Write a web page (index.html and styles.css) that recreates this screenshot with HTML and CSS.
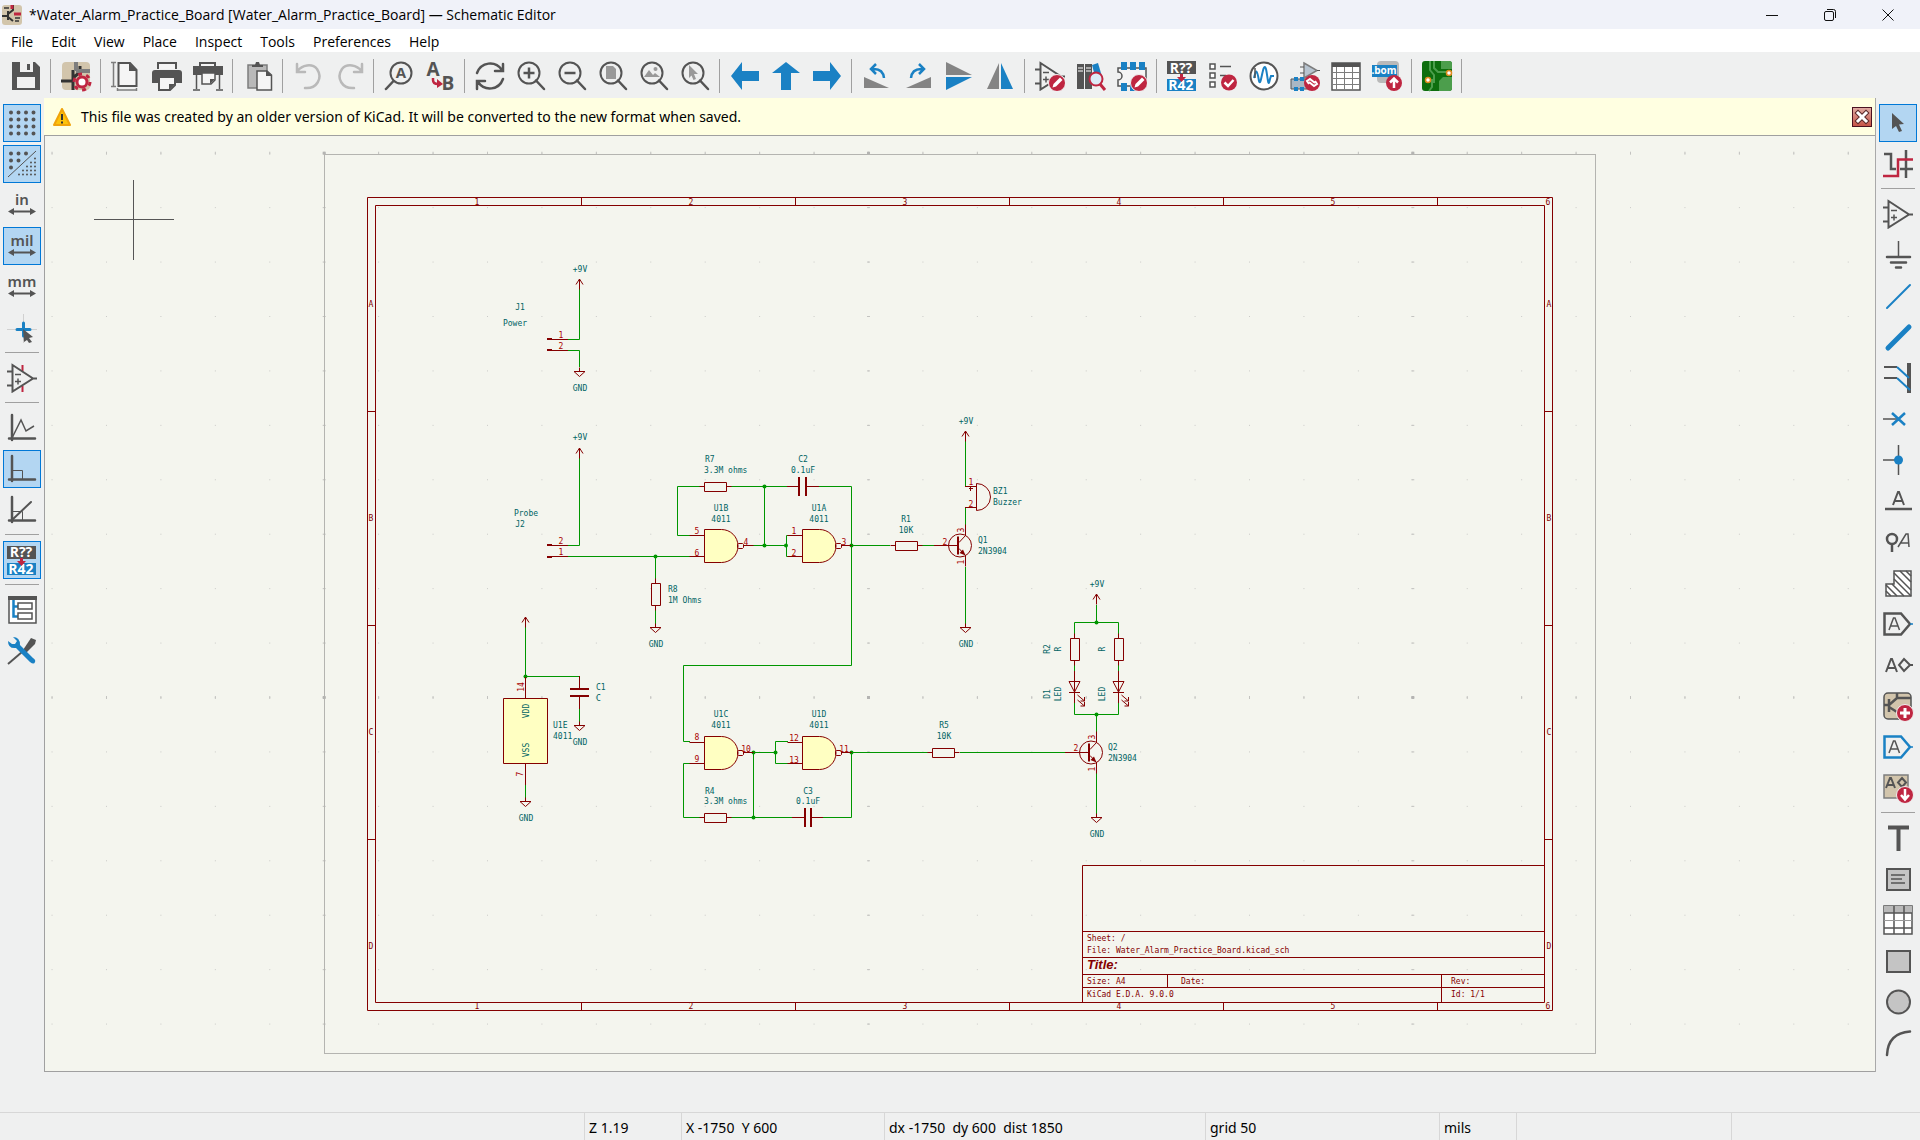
FILE: index.html
```
<!DOCTYPE html>
<html lang="en">
<head>
    <meta charset="UTF-8">
    <meta name="viewport" content="width=device-width, initial-scale=1.0">
    <title>*Water_Alarm_Practice_Board [Water_Alarm_Practice_Board] — Schematic Editor</title>
    <link rel="stylesheet" href="styles.css">
</head>
<body>
    <!-- shared icon parts -->
    <svg class="defs" aria-hidden="true">
        <symbol id="lens" viewBox="0 0 30 30">
            <circle cx="13" cy="12" r="10.500" fill="none" stroke="#545454" stroke-width="2"/>
            <path d="M20 19.500 L28 28" stroke="#545454" stroke-width="2.500" stroke-linecap="round"/>
        </symbol>
        <symbol id="opamp" viewBox="0 0 30 30">
            <path d="M5.500 2 L26 15.500 L5.500 28.500z M0 8.500 h5 M0 22.500 h5 M26 15.500 h4" fill="none" stroke="#545454" stroke-width="2"/>
            <path d="M8 11.500 h6 M8 18.500 h6 M11 15.500 v6" stroke="#545454" stroke-width="1.500"/>
        </symbol>
        <symbol id="pencil" viewBox="0 0 30 30">
            <circle cx="22" cy="22" r="8.500" fill="#bf2641" stroke="#f0f0f0"/>
            <path d="M17.500 26.500 l1 -3.500 6.500 -6.500 2.500 2.500 -6.500 6.500z" fill="#fff"/>
        </symbol>
        <symbol id="axes" viewBox="0 0 30 30">
            <path d="M5 2 V27 M2 25.500 H28" stroke="#545454" stroke-width="2.500" stroke-linecap="round"/>
        </symbol>
        <symbol id="arrows-h" viewBox="0 0 30 30">
            <path d="M5 21.500 H25" stroke="#545454" stroke-width="2"/>
            <path d="M1 21.500 l6 -3.500 v7z M29 21.500 l-6 -3.500 v7z" fill="#545454"/>
        </symbol>
        <symbol id="label-flag" viewBox="0 0 30 30">
            <path d="M1.500 4.500 H18 L27 15 L18 25.500 H1.500z" fill="none" stroke="currentColor" stroke-width="2.500"/>
            <path d="M27 15 h3" stroke="#1a81c4" stroke-width="1.500"/>
            <path d="M6 21 L10.500 9 h1.500 L16.500 21 M8 17 h7" fill="none" stroke="#545454" stroke-width="1.500"/>
        </symbol>
    </svg>

    <header class="title-bar">
        <svg class="app-icon" viewBox="0 0 20 20">
            <rect width="20" height="20" rx="3" fill="#d2c5ac"/>
            <path d="M6 6 V15 M0 11 H6 M6 9 L11 5 V0 M6 12 L11 16" fill="none" stroke="#333" stroke-width="2"/>
            <path d="M10 4 V0 M12 9 h7" stroke="#bf2641" stroke-width="3"/>
            <path d="M2 3 h5 M13 13 h5 M13 16 h4" stroke="#333" stroke-width="1.500"/>
        </svg>
        <h1>*Water_Alarm_Practice_Board [Water_Alarm_Practice_Board] — Schematic Editor</h1>
        <div class="window-buttons">
            <button aria-label="Minimize"><svg viewBox="0 0 14 14"><path d="M1 7.500 H13"/></svg></button>
            <button aria-label="Restore"><svg viewBox="0 0 14 14"><rect x="1.500" y="3.500" width="9" height="9" rx="1.500"/><path d="M4 1.500 h6.500 a2 2 0 0 1 2 2 V10"/></svg></button>
            <button aria-label="Close"><svg viewBox="0 0 14 14"><path d="M1.500 1.500 L12.500 12.500 M12.500 1.500 L1.500 12.500"/></svg></button>
        </div>
    </header>

    <nav class="menu-bar">
        <button>File</button>
        <button>Edit</button>
        <button>View</button>
        <button>Place</button>
        <button>Inspect</button>
        <button>Tools</button>
        <button>Preferences</button>
        <button>Help</button>
    </nav>

    <div class="toolbar" role="toolbar">
        <button aria-label="Save"><svg viewBox="0 0 30 30"><path d="M1 1 H24 L29 6 V29 H1z" fill="#545454"/><path d="M9 1 h13 v10 h-13z M6 16 h18 v11 h-18z" fill="#f0f0f0"/><path d="M16 3 h3 v6 h-3z" fill="#545454"/></svg></button>
        <hr>
        <button aria-label="Schematic setup"><svg viewBox="0 0 30 30"><rect x="1" y="1" width="28" height="28" rx="4" fill="#d2c5ac"/><path d="M12 9 V29 M0 20 H12 M12 17 L19 11 V5" stroke="#333" stroke-width="3" fill="none"/><path d="M15 1 v9 M15 10 h14" stroke="#7d7d7d" stroke-width="4"/><circle cx="21" cy="21" r="8" fill="none" stroke="#bf2641" stroke-width="3" stroke-dasharray="4 4.370"/><circle cx="21" cy="21" r="5" fill="#fff" stroke="#bf2641" stroke-width="3"/></svg></button>
        <hr>
        <button aria-label="Page settings"><svg viewBox="0 0 30 30"><path d="M7.500 2 H19 L25.500 9 V25 H7.500z" fill="#f5f5f5" stroke="#545454" stroke-width="2"/><path d="M18 2 v8 h8z" fill="#545454"/><path d="M2.500 1 V25 M0 1.500 h5 M0 25.500 h5 M6 29 H26 M6.500 27 v3 M25.500 27 v3" stroke="#7d7d7d" stroke-width="1.500"/></svg></button>
        <button aria-label="Print"><svg viewBox="0 0 30 30"><path d="M6 8 V2 H24 V8" fill="#f5f5f5" stroke="#545454" stroke-width="2"/><path d="M3 9 H27 a3 3 0 0 1 3 3 V22 H0 V12 a3 3 0 0 1 3 -3z" fill="#545454"/><path d="M7 16 H23 V24 L18 29 H7z" fill="#f5f5f5" stroke="#545454" stroke-width="2"/><path d="M23 23 h-6 v6z" fill="#545454"/></svg></button>
        <button aria-label="Plot"><svg viewBox="0 0 30 30"><path d="M7 6 V2 H22 V6" fill="#f5f5f5" stroke="#545454" stroke-width="2"/><path d="M0 5 H30 V14 H0z" fill="#545454"/><path d="M3.500 12 V28 M26.500 12 V28 M0 29 h7 M23 29 h7" stroke="#545454" stroke-width="1.500"/><path d="M9 12 H22 V19 L18 23 H9z" fill="#f5f5f5" stroke="#545454" stroke-width="1.500"/><path d="M22 18 h-5 v5z" fill="#545454"/></svg></button>
        <hr>
        <button aria-label="Paste"><svg viewBox="0 0 30 30"><path d="M5 4 H24 V27 H5z" fill="#b9b9b9" stroke="#7d7d7d" stroke-width="1.500"/><path d="M9 6 V4 h3 l1 -3 h3 l1 3 h3 V6z" fill="#545454"/><path d="M14 10 H24 L28.500 14 V29 H14z" fill="#f5f5f5" stroke="#545454" stroke-width="1.500"/><path d="M23 9 v6 h6z" fill="#545454"/></svg></button>
        <hr>
        <button aria-label="Undo" disabled><svg viewBox="0 0 30 30"><path d="M4 3 V11 H12 M4.500 10 C9 4 19 2 24 8 C30 17 24 28 12 27" fill="none" stroke="#b9b9b9" stroke-width="2.500" stroke-linecap="round"/></svg></button>
        <button aria-label="Redo" disabled><svg viewBox="0 0 30 30"><path d="M28 3 V11 H20 M27.500 10 C23 4 13 2 8 8 C2 17 8 28 20 27" fill="none" stroke="#b9b9b9" stroke-width="2.500" stroke-linecap="round"/></svg></button>
        <hr>
        <button aria-label="Find"><svg viewBox="0 0 30 30"><circle cx="17" cy="12" r="10.500" fill="none" stroke="#545454" stroke-width="2"/><path d="M9.500 20 L2 28" stroke="#545454" stroke-width="2.500" stroke-linecap="round"/><text class="icon-text" x="17" y="17" font-size="15">A</text></svg></button>
        <button aria-label="Find and replace"><svg viewBox="0 0 30 30"><text class="icon-text" x="8" y="15" font-size="19">A</text><text class="icon-text" x="23" y="29" font-size="19">B</text><path d="M8 17 v2 q0 4 5 4" fill="none" stroke="#bf2641" stroke-width="2.500"/><path d="M12 18 l6 5 -6 4z" fill="#bf2641"/></svg></button>
        <hr>
        <button aria-label="Refresh"><svg viewBox="0 0 30 30"><path d="M2 12 C6 1 20 -1 27 9 M28 3 V10 H20 M28 18 C24 29 10 31 3 21 M2 28 V20 H10" fill="none" stroke="#545454" stroke-width="2.500" stroke-linecap="round"/></svg></button>
        <button aria-label="Zoom in"><svg viewBox="0 0 30 30"><use href="#lens"/><path d="M7.500 12 H18.500 M13 6.500 V17.500" stroke="#545454" stroke-width="2.500"/></svg></button>
        <button aria-label="Zoom out"><svg viewBox="0 0 30 30"><use href="#lens"/><path d="M7.500 12 H18.500" stroke="#545454" stroke-width="2.500"/></svg></button>
        <button aria-label="Zoom to fit"><svg viewBox="0 0 30 30"><use href="#lens"/><path d="M8 5 h7 l3 3 v10 H8z" fill="#999"/></svg></button>
        <button aria-label="Zoom to objects"><svg viewBox="0 0 30 30"><use href="#lens"/><path d="M5 16 l5 -7 4 5 2 -2 5 4z" fill="#999"/><circle cx="16.500" cy="8" r="2" fill="#999"/></svg></button>
        <button aria-label="Zoom to selection"><svg viewBox="0 0 30 30"><use href="#lens"/><path d="M9 4 L18 13 H14 L16 18 L13.500 19 L11.500 14.500 L9 17z" fill="#999"/></svg></button>
        <hr>
        <button aria-label="Back"><svg viewBox="0 0 30 30"><path d="M1 15 L12 1 V10 H29 V20 H12 V29z" fill="#1a81c4"/></svg></button>
        <button aria-label="Up"><svg viewBox="0 0 30 30"><path d="M15 1 L29 12 H20 V29 H10 V12 H1z" fill="#1a81c4"/></svg></button>
        <button aria-label="Forward"><svg viewBox="0 0 30 30"><path d="M29 15 L18 1 V10 H1 V20 H18 V29z" fill="#1a81c4"/></svg></button>
        <hr>
        <button aria-label="Rotate counterclockwise"><svg viewBox="0 0 30 30"><path d="M2 16 V27 H27z" fill="#848484"/><path d="M14 3 L9 8 L14 13 M10 8 Q21 7 22 17" fill="none" stroke="#1a81c4" stroke-width="2.500"/></svg></button>
        <button aria-label="Rotate clockwise"><svg viewBox="0 0 30 30"><path d="M28 16 V27 H3z" fill="#848484"/><path d="M16 3 L21 8 L16 13 M20 8 Q9 7 8 17" fill="none" stroke="#1a81c4" stroke-width="2.500"/></svg></button>
        <button aria-label="Mirror vertically"><svg viewBox="0 0 30 30"><path d="M2 1 L28 14 H2z" fill="#848484"/><path d="M2 16 H28 L2 29z" fill="#1a81c4"/></svg></button>
        <button aria-label="Mirror horizontally"><svg viewBox="0 0 30 30"><path d="M14 2 V28 H2z" fill="#848484"/><path d="M16 2 L28 28 H16z" fill="#1a81c4"/></svg></button>
        <hr>
        <button aria-label="Symbol editor"><svg viewBox="0 0 30 30"><use href="#opamp"/><use href="#pencil"/></svg></button>
        <button aria-label="Symbol library browser"><svg viewBox="0 0 30 30"><path d="M1 3 h7 v25 h-7z M9 3 h7 v25 h-7z" fill="#545454"/><path d="M2 7 h5 M2 10 h5 M10 7 h5 M10 10 h5" stroke="#fff"/><path d="M16 4 l6 -2 5 17 h-7z" fill="#1a81c4"/><circle cx="20" cy="18" r="6.500" fill="#dcecf7" stroke="#bf2641" stroke-width="2"/><path d="M24 23 L29 29" stroke="#bf2641" stroke-width="3"/></svg></button>
        <button aria-label="Footprint editor"><svg viewBox="0 0 30 30"><path d="M1 7 H29 V25 H1 V19 a4 4 0 0 0 0 -8z" fill="#f5f5f5" stroke="#545454" stroke-width="1.500"/><path d="M4 1 h6 v8 h-6z M13 1 h6 v8 h-6z M22 1 h6 v8 h-6z M4 22 h6 v8 h-6z M13 22 h6 v8 h-6z" fill="#1a81c4"/><use href="#pencil"/></svg></button>
        <hr>
        <button aria-label="Annotate"><svg viewBox="0 0 30 30"><rect x="0" y="0" width="29" height="13" fill="#545454"/><rect x="0" y="18" width="29" height="12" fill="#1a81c4"/><text class="icon-text" x="14" y="12" font-size="14" fill="#fff">R??</text><text class="icon-text" x="14" y="29" font-size="14" fill="#fff">R42</text><path d="M13 13 h3 v3 h3 l-4.500 5 -4.500 -5 h3z" fill="#bf2641"/></svg></button>
        <button aria-label="Electrical rules checker"><svg viewBox="0 0 30 30"><path d="M2 3 h5 v5 h-5z M2 12 h5 v5 h-5z M2 21 h5 v5 h-5z" fill="#fff" stroke="#545454" stroke-width="1.500"/><path d="M12 5.500 H23 M12 14.500 H18" stroke="#545454" stroke-width="1.500"/><circle cx="21" cy="21.500" r="8" fill="#bf2641"/><path d="M16.500 21.500 l3.500 3.500 5.500 -6" fill="none" stroke="#fff" stroke-width="2.500"/></svg></button>
        <button aria-label="Simulator"><svg viewBox="0 0 30 30"><circle cx="15" cy="15" r="13.500" fill="#fff" stroke="#545454" stroke-width="2"/><path d="M5 17 C7 8 8 8 10 20 C12 28 14 -2 17 8 C19 17 19 28 21 18 L22 15 L25 15" fill="none" stroke="#1a81c4" stroke-width="2"/><path d="M6 7 V17" stroke="#545454" stroke-width="1.500"/></svg></button>
        <button aria-label="Assign footprints"><svg viewBox="0 0 30 30"><path d="M14 2 L27 9.500 L14 17z" fill="#b7c4d0" stroke="#7d7d7d" stroke-width="1.500"/><path d="M10 6 h4 M10 12 h4 M27 9.500 h3" stroke="#545454"/><path d="M1 18 H20 V28 H1z" fill="#a9b7c4" stroke="#545454"/><path d="M4 16 h4 v4 h-4z M10 16 h4 v4 h-4z M4 26 h4 v4 h-4z M10 26 h4 v4 h-4z" fill="#1a81c4"/><circle cx="22" cy="22" r="8" fill="#bf2641"/><path d="M19 23 l-2 -3 3 -2 5 4 M25 20 l2 3 -3 2 -5 -4" fill="none" stroke="#fff" stroke-width="2"/></svg></button>
        <button aria-label="Symbol fields table"><svg viewBox="0 0 30 30"><path d="M1 2 H29 V29 H1z" fill="#fff" stroke="#545454" stroke-width="1.500"/><path d="M1 2 h28 v4 h-28z" fill="#545454"/><path d="M1 11.500 H29 M1 17.500 H29 M1 23.500 H29 M5.500 6 V29 M13.500 6 V29 M21.500 6 V29" stroke="#7d7d7d"/></svg></button>
        <button aria-label="Bill of materials"><svg viewBox="0 0 30 30"><rect x="5" y="0" width="22" height="22" rx="4" fill="#b9b9b9"/><rect x="0" y="4" width="25" height="12" fill="#1a81c4"/><text class="icon-text" x="12" y="13" font-size="10" fill="#fff">.bom</text><circle cx="22" cy="22" r="8" fill="#bf2641"/><path d="M22 27 V18 M18 21.500 l4 -4 4 4" fill="none" stroke="#fff" stroke-width="2.500"/></svg></button>
        <hr>
        <button aria-label="PCB editor"><svg viewBox="0 0 30 30"><rect width="30" height="30" rx="3" fill="#0e6e0e"/><path d="M17 30 V20 L21 16 H30 V27 a3 3 0 0 1 -3 3z M19 0 V8 H30 V3 a3 3 0 0 0 -3 -3z" fill="#4c9e4c"/><path d="M12 0 V7 L16 11 H27 M6 19 H10 V26 L7 30 M8 0 V9 L12 14 V22" fill="none" stroke="#4c9e4c" stroke-width="2"/><circle cx="27" cy="12" r="2.500" fill="#fff" stroke="#e08a1e" stroke-width="1.500"/><circle cx="6" cy="19" r="2.500" fill="#fff" stroke="#e08a1e" stroke-width="1.500"/></svg></button>
        <hr>
    </div>

    <div class="workspace">
        <div class="palette" role="toolbar">
            <button class="active" aria-label="Show grid"><svg viewBox="0 0 30 30"><path d="M4 4.500 H28 M4 11.500 H28 M4 18.500 H28 M4 25.500 H28" stroke="#545454" stroke-width="4" stroke-linecap="round" stroke-dasharray="0 7.500"/></svg></button>
            <button class="active" aria-label="Grid overrides"><svg viewBox="0 0 30 30"><path d="M4 4.500 H20 M4 11.500 H12 M4 18.500 H5" stroke="#545454" stroke-width="4" stroke-linecap="round" stroke-dasharray="0 7.500"/><path d="M1 28 L29 2" stroke="#545454"/><path d="M28 9.500 H27 M28 13.500 H22 M28 17.500 H18 M28 21.500 H14 M28 25.500 H8" stroke="#545454" stroke-width="2" stroke-linecap="round" stroke-dasharray="0 4"/></svg></button>
            <button aria-label="Inches"><svg viewBox="0 0 30 30"><text class="icon-text unit" x="15" y="15" font-size="15">in</text><use href="#arrows-h"/></svg></button>
            <button class="active" aria-label="Mils"><svg viewBox="0 0 30 30"><text class="icon-text unit" x="15" y="15" font-size="15">mil</text><use href="#arrows-h"/></svg></button>
            <button aria-label="Millimeters"><svg viewBox="0 0 30 30"><text class="icon-text unit" x="15" y="15" font-size="15">mm</text><use href="#arrows-h"/></svg></button>
            <button aria-label="Crosshair"><svg viewBox="0 0 30 30"><path d="M0 16.500 H30 M16.500 1 V30" stroke="#d0d0d0"/><path d="M10 16.500 H23 M16.500 10 V23" stroke="#1a81c4" stroke-width="3" stroke-linecap="round"/><path d="M16 16 L26 24 L22 25 L25 29 L22 30 L20 27 L17 29z" fill="#545454"/></svg></button>
            <hr>
            <button aria-label="Hidden pins"><svg viewBox="0 0 30 30"><path d="M15.500 2 V8 M15.500 23 V29" stroke="#bf2641" stroke-width="2"/><use href="#opamp"/></svg></button>
            <hr>
            <button aria-label="Free angle"><svg viewBox="0 0 30 30"><use href="#axes"/><path d="M5 25 L14 7 L19 18 L27 13" fill="none" stroke="#545454" stroke-width="1.500"/></svg></button>
            <button class="active" aria-label="90 degrees"><svg viewBox="0 0 30 30"><use href="#axes"/><path d="M6 16.500 H15.500 V25" fill="none" stroke="#545454"/></svg></button>
            <button aria-label="45 degrees"><svg viewBox="0 0 30 30"><use href="#axes"/><path d="M6 16.500 H15.500 V25" fill="none" stroke="#545454"/><path d="M5 25 L24 7" stroke="#545454" stroke-width="2" stroke-linecap="round"/></svg></button>
            <hr>
            <button class="active" aria-label="Annotate automatically"><svg viewBox="0 0 30 30"><rect x="0" y="1" width="29" height="13" fill="#545454"/><rect x="0" y="18" width="29" height="12" fill="#1a81c4"/><text class="icon-text" x="14" y="12" font-size="14" fill="#fff">R??</text><text class="icon-text" x="14" y="29" font-size="14" fill="#fff">R42</text><path d="M13 13 h3 v3 h3 l-4.500 5 -4.500 -5 h3z" fill="#bf2641"/></svg></button>
            <hr>
            <button aria-label="Hierarchy navigator"><svg viewBox="0 0 30 30"><path d="M2 2 H29 V28 H2z" fill="#fff" stroke="#545454" stroke-width="1.500"/><path d="M1 1 h29 v4 h-29z" fill="#545454"/><path d="M6.500 5 V21.500 H11 M6.500 11.500 H11" fill="none" stroke="#1a81c4" stroke-width="2.500"/><path d="M11 8 h14 v6 h-14z M11 18 h14 v6 h-14z" fill="#fff" stroke="#545454" stroke-width="1.500"/></svg></button>
            <button aria-label="Properties"><svg viewBox="0 0 30 30"><path d="M1 28 L15 16" stroke="#545454" stroke-width="2"/><path d="M16 14 L24 2 L29 4 L28 8 L19 17z" fill="#545454"/><path d="M6 1 L10 5 L8 8 L5 8 L1 5 Q1 13 9 12 L23 26 Q27 29 28 26 Q29 24 26 22 L13 9 Q13 1 6 1z" fill="#1a81c4"/></svg></button>
        </div>

        <main class="editor">
            <div class="info-bar" role="status">
                <svg class="warning" viewBox="0 0 18 18"><path d="M9 1 L17 17 H1z" fill="#fdc30c" stroke="#f0a30a" stroke-width="2" stroke-linejoin="round"/><path d="M9 6 V12 M9 13.500 V15.500" stroke="#333" stroke-width="2"/></svg>
                <span>This file was created by an older version of KiCad. It will be converted to the new format when saved.</span>
                <button class="dismiss" aria-label="Dismiss"><svg viewBox="0 0 18 18"><path d="M5 5 L13 13 M13 5 L5 13" stroke="#5a2a2a" stroke-width="5" stroke-linecap="square"/><path d="M5 5 L13 13 M13 5 L5 13" stroke="#fff" stroke-width="3" stroke-linecap="square"/></svg></button>
            </div>

            <svg class="sheet" viewBox="45 136 1830 935" preserveAspectRatio="xMinYMin meet">
                <defs>
                    <pattern id="grid" x="868" y="697" width="54.430" height="54.430" patternUnits="userSpaceOnUse"><rect width="1" height="1" fill="#c9c9c6"/></pattern>
                    <pattern id="grid-col" x="867" y="697" width="544.300" height="54.430" patternUnits="userSpaceOnUse"><rect width="3" height="1" fill="#c3c3c0"/></pattern>
                    <pattern id="grid-row" x="868" y="696" width="54.430" height="544.300" patternUnits="userSpaceOnUse"><rect width="1" height="3" fill="#c3c3c0"/></pattern>
                    <pattern id="grid-major" x="867" y="696" width="544.300" height="544.300" patternUnits="userSpaceOnUse"><rect width="3" height="3" fill="#b4b4b2"/></pattern>

                    <g id="power"><path class="part" d="M0 10.500 V0 M-3.500 5.500 L0 0 L3.500 5.500"/></g>
                    <g id="ground"><path class="part" d="M0 -4 V0 M-5.500 0 H5.500 L0 5z"/></g>
                    <g id="nand">
                        <path class="body" d="M0 0 H17 A16.500 16.500 0 0 1 17 33 H0z"/>
                        <path class="part" d="M34 14 h4 l1 1 v3 l-1 1 h-4 l-1 -1 v-3z M39 16 H49 M-15 6 H0 M-15 27 H0"/>
                    </g>
                    <g id="resistor"><path class="part" d="M-5 4 H0 M0 0 H22 V9 H0z M22 4 H27"/></g>
                    <g id="resistor-v"><path class="part" d="M4 -5 V0 M0 0 H9 V22 H0z M4 22 V27"/></g>
                    <g id="npn">
                        <circle class="part" r="11.500"/>
                        <path class="part" d="M-26 0 H-2 M-1 -3 L5.500 -10 V-21 M-1 3 L5.500 10 V21"/>
                        <path class="plate" d="M-2 -9 V9"/>
                        <path class="solid" d="M5.500 10 L-0.500 7.500 L3 4z"/>
                    </g>
                    <g id="led">
                        <path class="part" d="M0 -21 V11 M-5.500 -10.500 H5.500 L0 0z M-5.500 0.500 H5.500"/>
                        <path class="part" d="M3 3 L10 9 V5 M10 9 H6 M3 8 L10 14 V10 M10 14 H6"/>
                    </g>
                </defs>

                <rect x="45" y="136" width="1830" height="935" fill="url(#grid)"/>
                <rect x="45" y="136" width="1830" height="935" fill="url(#grid-col)"/>
                <rect x="45" y="136" width="1830" height="935" fill="url(#grid-row)"/>
                <rect x="45" y="136" width="1830" height="935" fill="url(#grid-major)"/>
                <rect class="page-edge" x="324.500" y="154.500" width="1271" height="899"/>
                <path class="cursor" d="M94 219.500 H174 M133.500 180 V260"/>

                <!-- drawing frame -->
                <path class="part" d="M367.500 197.500 H1552.500 V1010.500 H367.500z M375.500 205.500 H1544.500 V1002.500 H375.500z"/>
                <path class="part" d="M581.500 197 v8 M795.500 197 v8 M1009.500 197 v8 M1223.500 197 v8 M1437.500 197 v8 M581.500 1002 v8 M795.500 1002 v8 M1009.500 1002 v8 M1223.500 1002 v8 M1437.500 1002 v8"/>
                <path class="part" d="M367 411.500 h8 M367 625.500 h8 M367 839.500 h8 M1544 411.500 h8 M1544 625.500 h8 M1544 839.500 h8"/>
                <g class="frame-text mid">
                    <text x="477" y="205">1</text><text x="691" y="205">2</text><text x="905" y="205">3</text><text x="1119" y="205">4</text><text x="1333" y="205">5</text><text x="1548" y="205">6</text>
                    <text x="477" y="1009">1</text><text x="691" y="1009">2</text><text x="905" y="1009">3</text><text x="1119" y="1009">4</text><text x="1333" y="1009">5</text><text x="1548" y="1009">6</text>
                    <text x="371" y="307">A</text><text x="371" y="521">B</text><text x="371" y="735">C</text><text x="371" y="949">D</text>
                    <text x="1549" y="307">A</text><text x="1549" y="521">B</text><text x="1549" y="735">C</text><text x="1549" y="949">D</text>
                </g>

                <!-- title block -->
                <path class="part" d="M1082.500 1002 V865.500 H1544 M1082 931.500 H1544 M1082 957.500 H1544 M1082 974.500 H1544 M1082 987.500 H1544 M1167.500 974 V987 M1441.500 974 V1002"/>
                <g class="frame-text">
                    <text x="1087" y="941">Sheet: /</text>
                    <text x="1087" y="953">File: Water_Alarm_Practice_Board.kicad_sch</text>
                    <text class="block-title" x="1087" y="969">Title:</text>
                    <text x="1087" y="984">Size: A4</text>
                    <text x="1181" y="984">Date:</text>
                    <text x="1451" y="984">Rev:</text>
                    <text x="1087" y="997">KiCad E.D.A. 9.0.0</text>
                    <text x="1451" y="997">Id: 1/1</text>
                </g>

                <!-- wires -->
                <g class="wire">
                    <path d="M579.500 289 V339.500 H568 M568 350.500 H579.500 V367"/>
                    <path d="M579.500 458 V545.500 H568 M568 556.500 H690"/>
                    <path d="M655.500 556 V579 M655.500 610 V624"/>
                    <path d="M690 535.500 H677.500 V486.500 H700 M731 486.500 H787 M819 486.500 H851.500 V665.500 H683.500 V741.500 H690"/>
                    <path d="M764.500 486 V545 M753 545.500 H786.500 M788 535.500 H786.500 V556.500 H788"/>
                    <path d="M851 545.500 H890 M921 545.500 H934"/>
                    <path d="M965.500 441 V486.500 M965.500 525 V507.500 M965.500 567 V624"/>
                    <path d="M525.500 627 V676.500 H579.500 M579.500 709 V722 M525.500 785 V798"/>
                    <path d="M690 763.500 H683.500 V817.500 H700 M731 817.500 H792 M823 817.500 H851.500 V752 M753.500 752 V817"/>
                    <path d="M753 752.500 H775.500 M788 741.500 H775.500 V763.500 H788 M851 752.500 H928 M960 752.500 H1065"/>
                    <path d="M1096.500 605 V622.500 M1074.500 634 V622.500 H1118.500 V634 M1074.500 665 V672 M1118.500 665 V672"/>
                    <path d="M1074.500 703 V714.500 H1118.500 V703 M1096.500 714 V732 M1096.500 773 V814"/>
                </g>
                <g class="junction">
                    <circle cx="764.500" cy="486.500" r="2"/><circle cx="764.500" cy="545.500" r="2"/><circle cx="786" cy="545.500" r="2"/><circle cx="851.500" cy="545.500" r="2"/>
                    <circle cx="655.500" cy="556.500" r="2"/><circle cx="525.500" cy="676.500" r="2"/>
                    <circle cx="753.500" cy="752.500" r="2"/><circle cx="775.500" cy="752.500" r="2"/><circle cx="851.500" cy="752.500" r="2"/><circle cx="753.500" cy="817.500" r="2"/>
                    <circle cx="1096.500" cy="622.500" r="2"/><circle cx="1096.500" cy="714.500" r="2"/>
                </g>

                <!-- symbols -->
                <use href="#power" x="579.500" y="279"/>
                <use href="#power" x="579.500" y="448"/>
                <use href="#power" x="525.500" y="617"/>
                <use href="#power" x="965.500" y="431"/>
                <use href="#power" x="1096.500" y="594"/>
                <use href="#ground" x="579.500" y="371.500"/>
                <use href="#ground" x="655.500" y="627.500"/>
                <use href="#ground" x="965.500" y="627.500"/>
                <use href="#ground" x="579.500" y="725.500"/>
                <use href="#ground" x="525.500" y="801.500"/>
                <use href="#ground" x="1096.500" y="817.500"/>

                <path class="part" d="M547 339.500 H568 M547 350.500 H568 M547 545.500 H568 M547 556.500 H568"/>
                <path class="part" d="M547 338.500 h5 M547 349.500 h5 M547 544.500 h5 M547 557.500 h5"/>

                <use href="#nand" x="704.500" y="529.500"/>
                <use href="#nand" x="802.500" y="529.500"/>
                <use href="#nand" x="704.500" y="736.500"/>
                <use href="#nand" x="802.500" y="736.500"/>
                <use href="#resistor" x="704.500" y="482.500"/>
                <use href="#resistor" x="895.500" y="541.500"/>
                <use href="#resistor" x="704.500" y="813.500"/>
                <use href="#resistor" x="932.500" y="748.500"/>
                <use href="#resistor-v" x="651.500" y="583.500"/>
                <use href="#resistor-v" x="1070.500" y="638.500"/>
                <use href="#resistor-v" x="1114.500" y="638.500"/>
                <use href="#npn" x="960" y="545.500"/>
                <use href="#npn" x="1091" y="752.500"/>
                <use href="#led" x="1074.500" y="692"/>
                <use href="#led" x="1118.500" y="692"/>

                <path class="part" d="M787 486.500 H799 M806 486.500 H819 M792 817.500 H805 M811 817.500 H823 M579.500 676 V689 M579.500 696 V709"/>
                <path class="plate" d="M799 477 V496 M806 477 V496 M805 808 V827 M811 808 V827 M570 689 H589 M570 696 H589"/>
                <path class="part" d="M965 486.500 H976 M965 507.500 H976 M976.500 483.500 A14 13.500 0 0 1 976.500 510.500z M969 488.500 h4 M970.500 487 v4"/>
                <path class="body" d="M503.500 698.500 H547.500 V763.500 H503.500z"/>
                <path class="part" d="M525.500 677 V698 M525.500 763 V785"/>

                <!-- pin numbers -->
                <g class="pin">
                    <text x="561" y="338">1</text><text x="561" y="349">2</text><text x="561" y="544">2</text><text x="561" y="555">1</text>
                    <text x="697" y="534">5</text><text x="697" y="556">6</text><text x="746" y="545">4</text>
                    <text x="794" y="534">1</text><text x="794" y="556">2</text><text x="844" y="545">3</text>
                    <text x="697" y="740">8</text><text x="697" y="762">9</text><text x="746" y="752">10</text>
                    <text x="794" y="741">12</text><text x="794" y="763">13</text><text x="844" y="752">11</text>
                    <text x="971" y="485">1</text><text x="971" y="507">2</text>
                    <text x="945" y="545">2</text><text x="1076" y="751">2</text>
                    <text transform="translate(964 530) rotate(-90)">3</text><text transform="translate(964 562) rotate(-90)">1</text>
                    <text transform="translate(1095 737) rotate(-90)">3</text><text transform="translate(1095 769) rotate(-90)">1</text>
                    <text transform="translate(524 687) rotate(-90)">14</text><text transform="translate(523 774) rotate(-90)">7</text>
                </g>

                <!-- references and values -->
                <g class="label mid">
                    <text x="580" y="272">+9V</text><text x="580" y="440">+9V</text><text x="966" y="424">+9V</text><text x="1097" y="587">+9V</text>
                    <text x="580" y="391">GND</text><text x="656" y="647">GND</text><text x="966" y="647">GND</text><text x="580" y="745">GND</text><text x="526" y="821">GND</text><text x="1097" y="837">GND</text>
                    <text x="520" y="310">J1</text><text x="515" y="326">Power</text><text x="526" y="516">Probe</text><text x="520" y="527">J2</text>
                    <text x="803" y="462">C2</text><text x="803" y="473">0.1uF</text><text x="808" y="794">C3</text><text x="808" y="804">0.1uF</text>
                    <text x="721" y="511">U1B</text><text x="721" y="522">4011</text><text x="819" y="511">U1A</text><text x="819" y="522">4011</text>
                    <text x="721" y="717">U1C</text><text x="721" y="728">4011</text><text x="819" y="717">U1D</text><text x="819" y="728">4011</text>
                    <text x="906" y="522">R1</text><text x="906" y="533">10K</text><text x="944" y="728">R5</text><text x="944" y="739">10K</text>
                    <text transform="translate(529 711) rotate(-90)">VDD</text><text transform="translate(529 750) rotate(-90)">VSS</text>
                    <text transform="translate(1050 649) rotate(-90)">R2</text><text transform="translate(1061 649) rotate(-90)">R</text><text transform="translate(1105 649) rotate(-90)">R</text>
                    <text transform="translate(1050 694) rotate(-90)">D1</text><text transform="translate(1061 694) rotate(-90)">LED</text><text transform="translate(1105 694) rotate(-90)">LED</text>
                </g>
                <g class="label">
                    <text x="705" y="462">R7</text><text x="704" y="473">3.3M ohms</text>
                    <text x="705" y="794">R4</text><text x="704" y="804">3.3M ohms</text>
                    <text x="668" y="592">R8</text><text x="668" y="603">1M Ohms</text>
                    <text x="993" y="494">BZ1</text><text x="993" y="505">Buzzer</text>
                    <text x="978" y="543">Q1</text><text x="978" y="554">2N3904</text>
                    <text x="1108" y="750">Q2</text><text x="1108" y="761">2N3904</text>
                    <text x="596" y="690">C1</text><text x="596" y="701">C</text>
                    <text x="553" y="728">U1E</text><text x="553" y="739">4011</text>
                </g>
            </svg>
        </main>

        <div class="palette" role="toolbar">
            <button class="active" aria-label="Select"><svg viewBox="0 0 30 30"><path d="M9 5 L21 16 L16 16.500 L19 23 L16 24 L13 18 L9 21z" fill="#545454"/></svg></button>
            <button aria-label="Highlight net"><svg viewBox="0 0 30 30"><path d="M1 5 H8 V20 H13 M23 1 V29 M17 20 H30" fill="none" stroke="#545454" stroke-width="2.500"/><path d="M0 27 H15 V10.500 H30" fill="none" stroke="#bf2641" stroke-width="2.500"/></svg></button>
            <hr>
            <button aria-label="Place symbol"><svg viewBox="0 0 30 30"><use href="#opamp"/></svg></button>
            <button aria-label="Place power"><svg viewBox="0 0 30 30"><path d="M15.500 1 V16" stroke="#545454" stroke-width="1.500"/><path d="M4 17 H27 M8 22.500 H23 M13 27.500 H18" stroke="#545454" stroke-width="2.500" stroke-linecap="round"/></svg></button>
            <button aria-label="Draw wire"><svg viewBox="0 0 30 30"><path d="M4 27 L27 4" stroke="#1a81c4" stroke-width="2" stroke-linecap="round"/></svg></button>
            <button aria-label="Draw bus"><svg viewBox="0 0 30 30"><path d="M5 26 L26 5" stroke="#1a81c4" stroke-width="5" stroke-linecap="round"/></svg></button>
            <button aria-label="Bus entry"><svg viewBox="0 0 30 30"><path d="M26 0 V30" stroke="#545454" stroke-width="4"/><path d="M1 4 H14 M1 15 H14" stroke="#545454" stroke-width="2"/><path d="M14 4 L26 15 M14 15 L27 27" stroke="#1a81c4" stroke-width="2"/></svg></button>
            <button aria-label="No connect"><svg viewBox="0 0 30 30"><path d="M0 15 H15" stroke="#545454" stroke-width="1.500"/><path d="M9 9 L22 21 M22 9 L9 21" stroke="#1a81c4" stroke-width="2.500"/></svg></button>
            <button aria-label="Junction"><svg viewBox="0 0 30 30"><path d="M0 15 H15 M15.500 0 V30" stroke="#545454" stroke-width="1.500"/><circle cx="15.500" cy="15" r="4.500" fill="#1a81c4"/></svg></button>
            <button aria-label="Net label"><svg viewBox="0 0 30 30"><path d="M10 19 L15 6 h1 L21 19 M12 15 h8" fill="none" stroke="#545454" stroke-width="2"/><path d="M2 23 H29" stroke="#545454" stroke-width="2.500"/></svg></button>
            <button aria-label="Directive label"><svg viewBox="0 0 30 30"><circle cx="9" cy="12" r="5" fill="none" stroke="#545454" stroke-width="2.500"/><path d="M9 17 V25" stroke="#545454" stroke-width="2.500"/><path d="M15 20 L23 7 h2 L26 20 M18 16 h8" fill="none" stroke="#545454" stroke-width="1.500"/></svg></button>
            <button aria-label="Rule area"><svg viewBox="0 0 30 30"><path d="M11 3 H28 V28 H3 V16 H11z" fill="#fff" stroke="#545454" stroke-width="1.500"/><path d="M11 5 L28 22 M11 11 L28 28 M17 3 L28 14 M9 16 L21 28 M3 17 L14 28 M3 23 L8 28 M23 3 L28 8" stroke="#545454" stroke-width="1.500"/></svg></button>
            <button aria-label="Global label"><svg viewBox="0 0 30 30"><use href="#label-flag"/></svg></button>
            <button aria-label="Hierarchical label"><svg viewBox="0 0 30 30"><path d="M3 22 L8 9 h1 L14 22 M5 18 h8" fill="none" stroke="#545454" stroke-width="2"/><path d="M21 9 L27 15 L21 21 L16 15z M27 15 h3" fill="none" stroke="#545454" stroke-width="2"/></svg></button>
            <button aria-label="Hierarchical sheet"><svg viewBox="0 0 30 30"><rect x="1" y="2" width="27" height="26" rx="4" fill="#d2c5ac" stroke="#545454" stroke-width="1.500"/><path d="M6 8 V21 M1 14 H6 M6 14 L14 7 H28 M14 2 V7 M6 16 L14 21" fill="none" stroke="#545454" stroke-width="2.500"/><circle cx="22" cy="22" r="8.500" fill="#bf2641" stroke="#f0f0f0"/><path d="M17 22 H27 M22 17 V27" stroke="#fff" stroke-width="3"/></svg></button>
            <button class="blue" aria-label="Sheet pin"><svg viewBox="0 0 30 30"><use href="#label-flag"/></svg></button>
            <button aria-label="Sync sheet pins"><svg viewBox="0 0 30 30"><rect x="1" y="2" width="24" height="23" fill="#d2c5ac" stroke="#7d7d7d" stroke-width="1.500"/><path d="M3 15 L7 5 h1 L12 15 M5 12 h6 M19 5 L23 9.500 L19 14 L15 9.500z" fill="none" stroke="#545454" stroke-width="2"/><circle cx="22" cy="22" r="8.500" fill="#bf2641" stroke="#f0f0f0"/><path d="M22 16 V26 M18 22 l4 4.500 4 -4.500" fill="none" stroke="#fff" stroke-width="2.500"/></svg></button>
            <hr>
            <button aria-label="Text"><svg viewBox="0 0 30 30"><path d="M5 4.500 H26 M15.500 4 V28" stroke="#545454" stroke-width="4"/></svg></button>
            <button aria-label="Text box"><svg viewBox="0 0 30 30"><rect x="4" y="5" width="23" height="21" fill="#c4c4c4" stroke="#545454" stroke-width="2"/><path d="M8 11 H22 M8 15 H19 M8 19 H22" stroke="#545454" stroke-width="1.500"/></svg></button>
            <button aria-label="Table"><svg viewBox="0 0 30 30"><path d="M1 1 H29 V29 H1z" fill="#fff" stroke="#545454" stroke-width="1.500"/><path d="M1 1 H29 V8 H1z" fill="#b9b9b9"/><path d="M1 8 H29 M1 23 H29 M11 1 V29 M21 1 V29" stroke="#545454" stroke-width="1.500"/><path d="M1 15.500 H29" stroke="#999"/></svg></button>
            <button aria-label="Rectangle"><svg viewBox="0 0 30 30"><rect x="4" y="5" width="23" height="21" fill="#c4c4c4" stroke="#545454" stroke-width="2"/></svg></button>
            <button aria-label="Circle"><svg viewBox="0 0 30 30"><circle cx="15.500" cy="15" r="11.500" fill="#c4c4c4" stroke="#545454" stroke-width="2"/></svg></button>
            <button aria-label="Arc"><svg viewBox="0 0 30 30"><path d="M4 27 Q5 5 27 3.500" fill="none" stroke="#545454" stroke-width="2.500" stroke-linecap="round"/></svg></button>
        </div>
    </div>

    <div class="message-panel"></div>

    <footer class="status-bar">
        <span class="fill"></span>
        <span class="zoom">Z 1.19</span>
        <span class="position">X -1750&nbsp; Y 600</span>
        <span class="delta">dx -1750&nbsp; dy 600&nbsp; dist 1850</span>
        <span class="grid-size">grid 50</span>
        <span class="units">mils</span>
        <span class="tool"></span>
        <span class="extra"></span>
    </footer>
</body>
</html>
```
FILE: styles.css
```
body {
    font-family: "Open Sans", "Noto Sans", sans-serif;
    font-size: 14px;
    background-color: #eff0f0;
    color: #000;
    margin: 0;
    height: 100vh;
    display: flex;
    flex-direction: column;
    overflow: hidden;
}

button {
    font: inherit;
    color: inherit;
    background: none;
    border: 1px solid transparent;
    padding: 0;
    display: flex;
    align-items: center;
    justify-content: center;
}

hr {
    border: none;
    margin: 0;
    flex: none;
}

.defs {
    position: absolute;
    width: 0;
    height: 0;
}

.icon-text {
    font-family: "Open Sans", sans-serif;
    font-weight: bold;
    text-anchor: middle;
}

.icon-text:not([fill]) {
    fill: #545454;
}

.unit {
    font-family: "Noto Sans", sans-serif;
    font-weight: 600;
}

/* title and menu */
.title-bar {
    display: flex;
    align-items: center;
    height: 29px;
    background-color: #f0f2f9;
}

.app-icon {
    width: 20px;
    height: 20px;
    margin: 0 7px 0 2px;
}

h1 {
    font-size: 14px;
    font-weight: normal;
    margin: 0;
    flex: 1;
    white-space: nowrap;
}

.window-buttons {
    display: flex;
    padding-right: 3px;
}

.window-buttons button {
    width: 58px;
    height: 28px;
}

.window-buttons svg {
    width: 14px;
    height: 14px;
    fill: none;
    stroke: #111;
}

.menu-bar {
    display: flex;
    height: 23px;
    padding-left: 2px;
    background-color: #fff;
}

.menu-bar button {
    padding: 1px 8px 0;
}

/* toolbars */
.toolbar {
    display: flex;
    align-items: center;
    height: 46px;
    box-sizing: border-box;
    padding: 2px 0 0 5px;
}

.toolbar button {
    width: 41px;
    height: 38px;
}

.toolbar svg,
.palette svg {
    width: 30px;
    height: 30px;
    overflow: visible;
}

.toolbar hr {
    width: 1px;
    height: 34px;
    margin: 0 4px;
    background-color: #a0a0a0;
}

.workspace {
    display: flex;
    flex: 1;
    min-height: 0;
}

.palette {
    display: flex;
    flex-direction: column;
    align-items: center;
    width: 44px;
    flex: none;
    padding-top: 6px;
    box-sizing: border-box;
    overflow: hidden;
}

.palette button {
    width: 38px;
    height: 38px;
    margin-bottom: 3px;
    flex: none;
}

.palette hr {
    width: 34px;
    height: 1px;
    margin: 2px 0 6px;
    background-color: #a0a0a0;
}

.palette .active {
    background-color: #b3d6f2;
    border-color: #0078d7;
}

.blue {
    color: #1a81c4;
}

.palette button:not(.blue) {
    color: #545454;
}

/* editor */
.editor {
    display: flex;
    flex-direction: column;
    flex: 1;
    min-width: 0;
    border-right: 1px solid #a9a9a9;
}

.info-bar {
    display: flex;
    align-items: center;
    height: 37px;
    padding: 0 3px 0 9px;
    font-family: "Noto Sans", sans-serif;
    background-color: #ffffe1;
    border-bottom: 1px solid #a0a0a0;
}

.warning {
    width: 18px;
    height: 18px;
    margin-right: 10px;
}

.info-bar span {
    flex: 1;
}

.dismiss {
    width: 20px;
    height: 20px;
    border: 1px solid #4b1220;
    background: linear-gradient(#dfa9a0, #c65548);
}

.dismiss svg {
    width: 18px;
    height: 18px;
}

.sheet {
    display: block;
    flex: 1;
    min-height: 0;
    width: 100%;
    box-sizing: border-box;
    background-color: #f4f5ee;
    border-left: 1px solid #a0a0a0;
    border-bottom: 1px solid #a0a0a0;
}

.page-edge {
    fill: none;
    stroke: #b4b4b0;
}

.cursor {
    stroke: #555;
}

.part {
    fill: none;
    stroke: #840000;
}

.body {
    fill: #ffffc2;
    stroke: #840000;
}

.plate {
    stroke: #840000;
    stroke-width: 2px;
}

.solid {
    fill: #840000;
}

.wire {
    fill: none;
    stroke: #009600;
}

.junction {
    fill: #009600;
}

.sheet text {
    font-family: "DejaVu Sans Mono", monospace;
    font-size: 8px;
}

.frame-text {
    fill: #840000;
}

.sheet .block-title {
    font-family: "Liberation Sans", sans-serif;
    font-size: 13px;
    font-weight: bold;
    font-style: italic;
}

.pin {
    fill: #a90000;
    text-anchor: middle;
}

.label {
    fill: #006464;
}

.mid {
    text-anchor: middle;
}

/* bottom */
.message-panel {
    height: 40px;
    border-bottom: 1px solid #d7d7d7;
}

.status-bar {
    display: flex;
    height: 27px;
    line-height: 29px;
    font-family: "Noto Sans", sans-serif;
}

.status-bar span {
    box-sizing: border-box;
    padding-left: 4px;
    border-right: 1px solid #d7d7d7;
    white-space: nowrap;
}

.status-bar .fill {
    flex: 1;
}

.zoom {
    width: 97px;
}

.position {
    width: 203px;
}

.delta {
    width: 321px;
}

.grid-size {
    width: 234px;
}

.units {
    width: 77px;
}

.tool {
    width: 215px;
}

.status-bar .extra {
    width: 188px;
    border-right: none;
}
```
